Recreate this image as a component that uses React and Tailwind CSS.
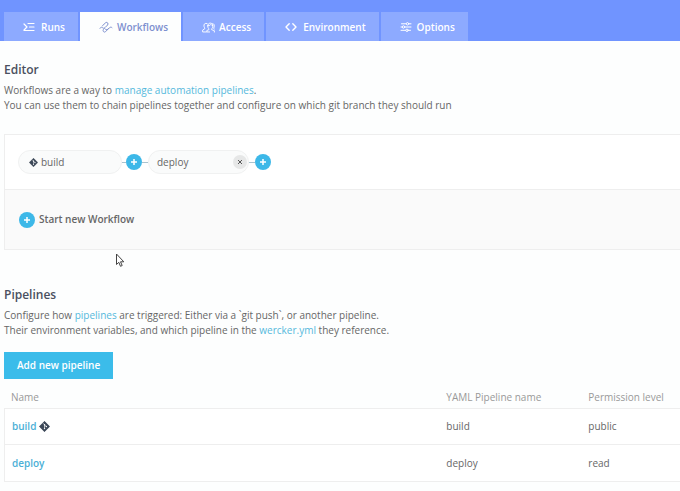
import React from "react";

const iconProps = {
  fill: "none",
  stroke: "currentColor",
  strokeLinecap: "round",
  strokeLinejoin: "round",
  "aria-hidden": true,
};

function RunsIcon() {
  return (
    <svg width="14" height="10" viewBox="0 0 14 10" {...iconProps} strokeWidth="1.2">
      <path d="M1 2l3 3-3 3M5 1.5h6M6.5 5H11M1 8.5h10" />
    </svg>
  );
}

function WorkflowsIcon() {
  return (
    <svg width="14" height="12" viewBox="0 0 14 12" {...iconProps} strokeWidth="1">
      <path d="M1 7.300C1.800 5.800 3 6 3.700 6.800C4.400 7.500 5.300 7.300 6 6.600L8.600 4C9.800 2.700 8.200.5 6.700 1.700L3.500 4.700M5.300 7.600L4.400 8.500C3.400 9.800 5 12 6.500 10.700L10.400 6.800C11.200 6 12.300 5.900 13 6.600" />
      <path d="M6.500 8.300C7.600 9.200 8.600 8.600 9.300 7.800" />
    </svg>
  );
}

function AccessIcon() {
  return (
    <svg width="13" height="11" viewBox="0 0 14 11" {...iconProps} strokeWidth="1">
      <path d="M5.500 1.200C3.200.3 1.600 2 2.200 4.300c.3 1.200.8 1.700.8 2.500L.7 8.300v2h4" />
      <path d="M6.200 3.800C6.200 1.900 7.300.8 8.900.8s2.800 1.100 2.800 3c0 1.600-.7 2.600-1.300 3.100v1l2.900 1v1.500M6.200 3.800c0 1.500.5 2.500 1.200 3.100v1L5.200 8.700v1.600h3" />
      <path d="M11.500 1.300c1.700 0 2 2 1.700 3.300l-.6 1.700.8 1M6.300 3.500c1.900.1 2.700-.5 3.300-1.300.5.900 1.200 1.200 2 1.300" />
    </svg>
  );
}

function CodeIcon() {
  return (
    <svg width="14" height="10" viewBox="0 0 14 10" {...iconProps} strokeWidth="1.400">
      <path d="M4.200 1.700L1 5l3.200 3.300M7.800 1.700L11 5 7.800 8.300" />
    </svg>
  );
}

function OptionsIcon() {
  return (
    <svg width="13" height="10" viewBox="0 0 13 10" {...iconProps} strokeWidth="1">
      <path d="M1.500 1.800H6M9 1.800h2M1 5h1M5 5h6M1 8.300h4.500M8.500 8.300h2" />
      <circle cx="7.500" cy="1.800" r="1.200" />
      <circle cx="3.500" cy="5" r="1.200" />
      <circle cx="7" cy="8.300" r="1.200" />
    </svg>
  );
}

function GitIcon({ className }) {
  return (
    <svg className={className} viewBox="0 0 12 12" aria-hidden="true">
      <path d="M6 .4L11.600 6 6 11.600.4 6z" fill="#3c4858" stroke="#3c4858" strokeWidth=".8" strokeLinejoin="round" />
      <path d="M4.500 2.500L6 4v4.500M6 4.200L8 6" fill="none" stroke="#fff" strokeWidth=".7" />
      <circle cx="6" cy="4.200" r=".8" fill="#fff" />
      <circle cx="6" cy="8.300" r=".8" fill="#fff" />
      <circle cx="8" cy="6.100" r=".8" fill="#fff" />
    </svg>
  );
}

function PlusDot() {
  return (
    <span className="flex size-4 shrink-0 items-center justify-center rounded-full bg-[#3db8e8] text-white">
      <svg width="6" height="6" viewBox="0 0 6 6" {...iconProps} strokeLinecap="butt" strokeWidth="1.500">
        <path d="M3 0v6M0 3h6" />
      </svg>
    </span>
  );
}

function Connector({ className }) {
  return <span className={`h-px shrink-0 bg-[#a9c3cf] ${className}`} />;
}

const tabs = [
  { label: "Runs", Icon: RunsIcon },
  { label: "Workflows", Icon: WorkflowsIcon, active: true },
  { label: "Access", Icon: AccessIcon },
  { label: "Environment", Icon: CodeIcon },
  { label: "Options", Icon: OptionsIcon },
];

const pipelines = [
  { name: "build", yaml: "build", permission: "public", git: true },
  { name: "deploy", yaml: "deploy", permission: "read" },
];

const link = "text-[#55b9dc]";

export default function App() {
  return (
    <div className="relative min-h-screen overflow-x-hidden bg-[#fdfefe] pb-2 font-['Open_Sans','Noto_Sans',sans-serif] text-[10px] leading-[15px] text-[#666666]">
      <nav className="flex gap-0.5 bg-[#7094ff] pt-3 pl-1">
        {tabs.map(({ label, Icon, active }) => (
          <a
            key={label}
            href="#"
            aria-current={active ? "page" : undefined}
            className={`flex h-[29px] items-center gap-1 pt-px pr-[13px] pl-[19px] font-semibold ${
              active ? "bg-[#fdfefe] text-[#7d90cf]" : "bg-[#8daaff] text-white"
            }`}
          >
            <Icon />
            {label}
          </a>
        ))}
      </nav>

      <main className="pl-1">
        <section className="pt-5">
          <h2 className="text-[12px] leading-[18px] font-semibold text-[#4a5060]">Editor</h2>
          <p className="mt-1">
            Workflows are a way to <a href="#" className={link}>manage automation pipelines</a>.
            <br />
            You can use them to chain pipelines together and configure on which git branch they should run
          </p>

          <div className="mt-[21px] border-y border-l border-[#eeeeee]">
            <div className="flex h-[54px] items-center bg-white pl-[13px]">
              <div className="flex h-6 w-[104px] items-center gap-[3px] rounded-full border border-[#f0f1f1] bg-[#fafbfb] pl-2.5">
                <GitIcon className="size-[9px]" />
                build
              </div>
              <Connector className="w-1" />
              <button type="button" aria-label="Add after build" className="shrink-0">
                <PlusDot />
              </button>
              <Connector className="w-1.5" />
              <div className="flex h-6 w-[101px] items-center justify-between rounded-full border border-[#f0f1f1] bg-[#fafbfb] pr-px pl-2">
                deploy
                <button
                  type="button"
                  aria-label="Remove deploy"
                  className="flex size-3.5 items-center justify-center rounded-full bg-[#e6e7e7] text-[#555555]"
                >
                  <svg width="4" height="4" viewBox="0 0 4 4" {...iconProps} strokeWidth="1">
                    <path d="M.3.3l3.400 3.400M3.700.3L.3 3.700" />
                  </svg>
                </button>
              </div>
              <Connector className="w-1.5" />
              <button type="button" aria-label="Add after deploy" className="shrink-0">
                <PlusDot />
              </button>
            </div>
            <div className="flex h-[60px] items-center border-t border-[#eeeeee] bg-[#fafafa] pl-3.5">
              <button type="button" className="flex items-center gap-1 font-semibold">
                <PlusDot />
                Start new Workflow
              </button>
            </div>
          </div>
        </section>

        <section className="pt-9">
          <h2 className="text-[12px] leading-[18px] font-semibold text-[#4a5060]">Pipelines</h2>
          <p className="mt-1">
            Configure how <a href="#" className={link}>pipelines</a> are triggered: Either via a `git push`, or another
            pipeline.
            <br />
            Their environment variables, and which pipeline in the <a href="#" className={link}>wercker.yml</a> they
            reference.
          </p>
          <button type="button" className="mt-3.5 h-[27px] bg-[#3bbcea] px-[13px] font-semibold text-white">
            Add new pipeline
          </button>

          <table className="mt-[7px] w-full table-fixed border-separate border-spacing-0 text-left">
            <thead className="text-[#999999]">
              <tr>
                <th className="h-[22px] w-[64.4%] pl-[7px] font-normal">Name</th>
                <th className="w-[21%] pl-[7px] font-normal">YAML Pipeline name</th>
                <th className="pl-[7px] font-normal">Permission level</th>
              </tr>
            </thead>
            <tbody>
              {pipelines.map((p, i) => (
                <tr key={p.name} className="bg-white">
                  <td
                    className={`h-[37px] border-b border-l border-[#eeeeee] pl-[7px] ${i === 0 ? "border-t" : ""}`}
                  >
                    <span className="flex items-center gap-[3px]">
                      <a href="#" className="font-semibold text-[#4bafd6]">{p.name}</a>
                      {p.git && <GitIcon className="size-[11px]" />}
                    </span>
                  </td>
                  <td className={`border-b border-[#eeeeee] pl-[7px] ${i === 0 ? "border-t" : ""}`}>{p.yaml}</td>
                  <td className={`border-b border-[#eeeeee] pl-[7px] ${i === 0 ? "border-t" : ""}`}>{p.permission}</td>
                </tr>
              ))}
            </tbody>
          </table>
        </section>
      </main>

      <svg className="pointer-events-none absolute top-[253px] left-[115px]" width="10" height="15" viewBox="0 0 10 15" aria-hidden="true">
        <path
          d="M1.500 1v10.500l2.300-2.200 1.700 4 1.700-.8-1.700-3.700h3.300z"
          fill="#fff"
          stroke="#444"
          strokeWidth="1"
          strokeLinejoin="round"
        />
      </svg>
    </div>
  );
}
